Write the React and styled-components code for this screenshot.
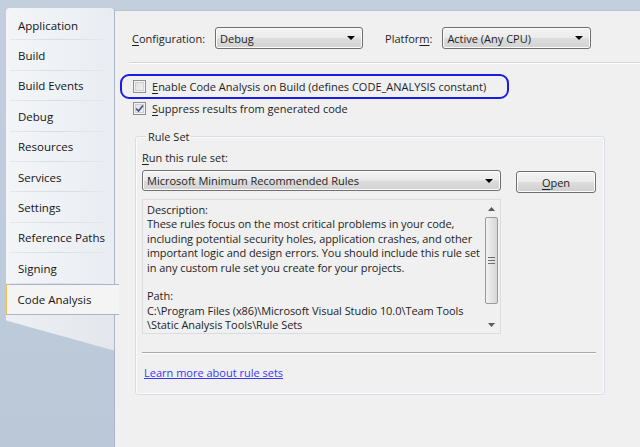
import React from "react";
import styled, { createGlobalStyle } from "styled-components";

const Global = createGlobalStyle`
  html, body { margin: 0; padding: 0; }
  body {
    background: #bcc9d9;
    font-family: "Open Sans", "Noto Sans", sans-serif;
    font-size: 11px;
    color: #1e1e1e;
    width: 640px;
    height: 447px;
    overflow: hidden;
  }
`;

const Page = styled.div`
  display: flex;
  height: 447px;
  background: linear-gradient(180deg, #c3cfdd 0%, #bac8d8 100%);
`;

const Side = styled.div`
  flex: 0 0 108px;
  margin: 8px 0 0 6px;
  display: flex;
  flex-direction: column;
  position: relative;
  z-index: 2;
`;

const TabList = styled.div`
  background: linear-gradient(90deg, #f3f5f8 0%, #e9edf2 100%);
  border-radius: 4px 4px 0 0;
  padding-top: 2px;
  display: flex;
  flex-direction: column;
`;

const Tab = styled.div`
  height: 30.4px;
  display: flex;
  align-items: center;
  padding-left: ${(p) => (p.$active ? "10.5px" : "12px")};
  box-sizing: border-box;
  font-size: 11.5px;
  color: #141414;
  position: relative;
  ${(p) =>
    p.$active
      ? `
    background: #f4f4f4;
    border-top: 1px solid #a8b6c8;
    border-bottom: 1px solid #a8b6c8;
    border-left: 1.5px solid #f2bf55;
    margin-right: -5px;
    height: 31px;
  `
      : `
    &::after {
      content: "";
      position: absolute;
      left: 4px;
      right: 10px;
      bottom: 0;
      height: 1px;
      background: linear-gradient(90deg, #e4e8ed, #d8dde4 50%, #e4e8ed);
    }
  `}
`;

const Tail = styled.div`
  height: 36px;
  background: linear-gradient(90deg, #eceff3 0%, #e3e7ed 100%);
  clip-path: polygon(0 0, 100% 0, 100% 100%, 0 6px);
`;

const Content = styled.div`
  flex: 1;
  min-width: 0;
  margin-top: 10px;
  background: #f0f0f0;
  border-left: 1px solid #a9b7c9;
  border-top: 1px solid #b6c3d2;
  display: flex;
  flex-direction: column;
  padding: 16px 0 0 0;
  position: relative;
  z-index: 1;
`;

const ConfigRow = styled.div`
  display: flex;
  align-items: center;
  padding-left: 17px;
  height: 22px;
`;

const Label = styled.span`
  margin-right: ${(p) => p.$mr || 0}px;
  white-space: nowrap;
`;

const U = styled.span`
  text-decoration: underline;
  text-underline-offset: 2px;
`;

const Select = styled.div`
  width: ${(p) => p.$w}px;
  height: ${(p) => p.$h || 22}px;
  box-sizing: border-box;
  border: 1px solid #707070;
  border-radius: 3px;
  background: linear-gradient(180deg, #f3f3f3 0%, #ebebeb 48%, #dddddd 52%, #d2d2d2 100%);
  box-shadow: inset 0 0 0 1px #fbfbfb;
  display: flex;
  align-items: center;
  padding: 0 7px 0 4px;
  margin-right: ${(p) => p.$mr || 0}px;
  flex-shrink: 0;
`;

const SelectText = styled.span`
  flex: 1;
  white-space: nowrap;
`;

const Arrow = styled.span`
  width: 0;
  height: 0;
  border-left: 4px solid transparent;
  border-right: 4px solid transparent;
  border-top: 4px solid #000;
`;

const Separator = styled.div`
  height: 1px;
  background: ${(p) => p.$c || "#d5d5d5"};
  border-bottom: 1px solid #fff;
  margin: ${(p) => p.$m};
`;

const Highlight = styled.div`
  margin: 10px 0 0 5px;
  width: 389px;
  height: 25px;
  box-sizing: border-box;
  border: 2px solid #1b1be6;
  border-radius: 9px;
  display: flex;
  align-items: center;
  padding-left: 11px;
`;

const CheckRow = styled.div`
  display: flex;
  align-items: center;
  height: 13px;
  padding-left: ${(p) => p.$pl || 0}px;
  margin-top: ${(p) => p.$mt || 0}px;
`;

const Box = styled.span`
  width: 13px;
  height: 13px;
  box-sizing: border-box;
  border: 1px solid #8e8f8f;
  background: linear-gradient(135deg, #dcdcdc 0%, #f6f6f6 100%);
  box-shadow: inset 0 0 0 1px #f4f4f4, inset 0 0 0 2px #d0d0d0;
  margin-right: 6px;
  display: flex;
  align-items: center;
  justify-content: center;
  flex-shrink: 0;
`;

const Group = styled.fieldset`
  margin: 14px 37px 0 20px;
  padding: 6px 8px 0 6px;
  border: 1px solid #d7dde3;
  border-radius: 3px;
  box-shadow: inset 0 0 0 1px #fbfbfb;
  height: 266px;
  box-sizing: border-box;
  display: flex;
  flex-direction: column;
`;

const Legend = styled.legend`
  padding: 0 2px;
  margin-left: 4px;
  font-size: 11px;
`;

const RuleRow = styled.div`
  display: flex;
  align-items: flex-start;
  margin-top: 5px;
`;

const LeftCol = styled.div`
  display: flex;
  flex-direction: column;
`;

const Button = styled.div`
  width: 80px;
  height: 22px;
  box-sizing: border-box;
  margin: 1px 0 0 15px;
  border: 1px solid #707070;
  border-radius: 3px;
  background: linear-gradient(180deg, #f2f2f2 0%, #ebebeb 48%, #dddddd 52%, #cfcfcf 100%);
  box-shadow: inset 0 0 0 1px #fcfcfc;
  display: flex;
  align-items: center;
  justify-content: center;
`;

const DescBox = styled.div`
  margin-top: 8px;
  width: 359px;
  height: 135px;
  box-sizing: border-box;
  border: 1px solid #d9dde2;
  background: #f0f0f0;
  display: flex;
`;

const DescText = styled.div`
  flex: 1;
  padding: 3px 0 0 4px;
  line-height: 14.4px;
  letter-spacing: -0.06px;
  white-space: pre;
  overflow: hidden;
`;

const Scroll = styled.div`
  width: 17px;
  display: flex;
  flex-direction: column;
  align-items: center;
  background: #f0f0f0;
`;

const ScrollBtn = styled.div`
  height: 17px;
  display: flex;
  align-items: center;
  justify-content: center;
`;

const Thumb = styled.div`
  width: 13px;
  height: 87px;
  box-sizing: border-box;
  border: 1px solid #9a9a9a;
  border-radius: 2px;
  background: linear-gradient(90deg, #f2f2f2 0%, #e4e4e4 50%, #d6d6d6 100%);
  display: flex;
  align-items: center;
  justify-content: center;
`;

const ScrollTrack = styled.div`
  flex: 1;
`;

const Link = styled.span`
  color: #3838ff;
  text-decoration: underline;
  margin: 11px 0 0 2px;
`;

const Grip = () => (
  <svg width="7" height="7" viewBox="0 0 7 7">
    <rect x="0" y="0" width="7" height="1" fill="#6e6e6e" />
    <rect x="0" y="3" width="7" height="1" fill="#6e6e6e" />
    <rect x="0" y="6" width="7" height="1" fill="#6e6e6e" />
  </svg>
);

const SmallTri = ({ up }) => (
  <svg width="7" height="4" viewBox="0 0 7 4">
    <polygon points={up ? "3.5,0 7,4 0,4" : "0,0 7,0 3.5,4"} fill="#5a5a5a" />
  </svg>
);

const Check = () => (
  <svg width="9" height="9" viewBox="0 0 9 9">
    <path d="M1 4.5 L3.5 7 L8 1.5" fill="none" stroke="#3c4f86" strokeWidth="1.6" />
  </svg>
);

const tabs = [
  "Application",
  "Build",
  "Build Events",
  "Debug",
  "Resources",
  "Services",
  "Settings",
  "Reference Paths",
  "Signing",
  "Code Analysis",
];

const desc = `Description:
These rules focus on the most critical problems in your code,
including potential security holes, application crashes, and other
important logic and design errors. You should include this rule set
in any custom rule set you create for your projects.

Path:
C:\\Program Files (x86)\\Microsoft Visual Studio 10.0\\Team Tools
\\Static Analysis Tools\\Rule Sets`;

export default function App() {
  return (
    <>
      <Global />
      <Page>
        <Side>
          <TabList>
            {tabs.map((t) => (
              <Tab key={t} $active={t === "Code Analysis"}>
                {t}
              </Tab>
            ))}
          </TabList>
          <Tail />
        </Side>
        <Content>
          <ConfigRow>
            <Label $mr={10}>
              <U>C</U>onfiguration:
            </Label>
            <Select $w={148} $mr={22}>
              <SelectText>Debug</SelectText>
              <Arrow />
            </Select>
            <Label $mr={10}>
              Platfor<U>m</U>:
            </Label>
            <Select $w={149}>
              <SelectText>Active (Any CPU)</SelectText>
              <Arrow />
            </Select>
          </ConfigRow>
          <Separator $m="13px 0 0 14px" />
          <Highlight>
            <CheckRow>
              <Box />
              <span>
                <U>E</U>nable Code Analysis on Build (defines CODE_ANALYSIS constant)
              </span>
            </CheckRow>
          </Highlight>
          <CheckRow $pl={18} $mt={3}>
            <Box>
              <Check />
            </Box>
            <span>
              <U>S</U>uppress results from generated code
            </span>
          </CheckRow>
          <Group>
            <Legend>Rule Set</Legend>
            <Label>
              <U>R</U>un this rule set:
            </Label>
            <RuleRow>
              <LeftCol>
                <Select $w={359} $h={21}>
                  <SelectText>Microsoft Minimum Recommended Rules</SelectText>
                  <Arrow />
                </Select>
                <DescBox>
                  <DescText>{desc}</DescText>
                  <Scroll>
                    <ScrollBtn>
                      <SmallTri up />
                    </ScrollBtn>
                    <Thumb>
                      <Grip />
                    </Thumb>
                    <ScrollTrack />
                    <ScrollBtn>
                      <SmallTri />
                    </ScrollBtn>
                  </Scroll>
                </DescBox>
              </LeftCol>
              <Button>
                <span>
                  <U>O</U>pen
                </span>
              </Button>
            </RuleRow>
            <Separator $m="18px 0 0 0" $c="#a8a8a8" />
            <Link>Learn more about rule sets</Link>
          </Group>
        </Content>
      </Page>
    </>
  );
}
